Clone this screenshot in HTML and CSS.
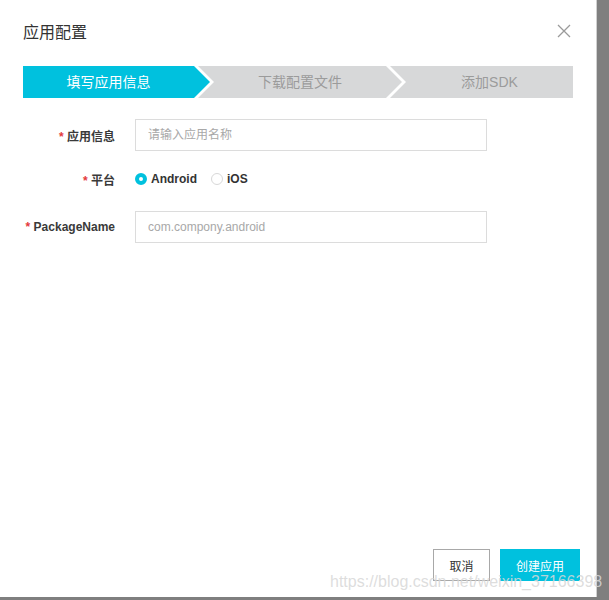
FILE: index.html
```html
<!DOCTYPE html>
<html lang="zh-CN">
<head>
    <meta charset="UTF-8">
    <title>应用配置</title>
    <link rel="stylesheet" href="styles.css">
</head>
<body>
    <div class="dialog">
        <div class="dialog-header">
            <h2 class="dialog-title">应用配置</h2>
            <span class="close">
                <svg width="14" height="14" viewBox="0 0 14 14"><path d="M1 1L13 13M13 1L1 13" stroke="#9a9a9a" stroke-width="1.3" fill="none"/></svg>
            </span>
        </div>

        <!-- steps -->
        <div class="steps">
            <div class="step first active">填写应用信息</div>
            <div class="step">下载配置文件</div>
            <div class="step last">添加SDK</div>
        </div>

        <div class="form">
            <div class="form-row">
                <label class="form-label"><span class="req">*</span> 应用信息</label>
                <input class="form-input" type="text" placeholder="请输入应用名称">
            </div>
            <div class="form-row radio-row">
                <label class="form-label"><span class="req">*</span> 平台</label>
                <span class="radio checked"><i></i>Android</span>
                <span class="radio"><i></i>iOS</span>
            </div>
            <div class="form-row">
                <label class="form-label"><span class="req">*</span> PackageName</label>
                <input class="form-input" type="text" placeholder="com.compony.android">
            </div>
        </div>

        <div class="dialog-footer">
            <button class="btn">取消</button>
            <button class="btn primary">创建应用</button>
        </div>
    </div>

    <div class="watermark">https://blog.csdn.net/weixin_37166398</div>
</body>
</html>
```

FILE: styles.css
```css
body {
    margin: 0;
    background-color: #7f7f7f;
    font-family: "Liberation Sans", "Noto Sans CJK SC", sans-serif;
    color: #333;
    width: 609px;
    height: 600px;
    overflow: hidden;
    position: relative;
}
.dialog {
    width: 597px;
    height: 597px;
    background: #fff;
    border-right: 1px solid #d0d0d0;
    box-sizing: border-box;
    display: flex;
    flex-direction: column;
}
.dialog-header {
    display: flex;
    justify-content: space-between;
    align-items: center;
    padding: 22px 25px 0 23px;
    height: 22px;
}
.dialog-title {
    margin: 0;
    font-size: 16px;
    font-weight: normal;
    color: #333;
    line-height: 22px;
}
.close {
    display: flex;
    margin-top: -5px;
}
.steps {
    display: flex;
    margin: 22px 0 0 23px;
    width: 550px;
    height: 32px;
}
.step {
    height: 32px;
    line-height: 32px;
    font-size: 14px;
    text-align: center;
    background: #d7d8d9;
    color: #9b9b9b;
    box-sizing: border-box;
    width: 204px;
    margin-left: -12px;
    padding: 0 16px;
    clip-path: polygon(0 0, calc(100% - 16px) 0, 100% 50%, calc(100% - 16px) 100%, 0 100%, 16px 50%);
}
.step.first {
    width: 187px;
    margin-left: 0;
    padding: 0 16px 0 0;
    clip-path: polygon(0 0, calc(100% - 16px) 0, 100% 50%, calc(100% - 16px) 100%, 0 100%);
}
.step.last {
    flex: 1;
    padding: 0 0 0 16px;
    clip-path: polygon(0 0, 100% 0, 100% 100%, 0 100%, 16px 50%);
}
.step.active {
    background: #00c1de;
    color: #fff;
}
.form {
    padding: 21px 0 0 23px;
}
.form-row {
    display: flex;
    align-items: center;
    height: 32px;
    margin-bottom: 16px;
}
.radio-row {
    height: 24px;
    margin-bottom: 20px;
}
.form-label {
    width: 92px;
    text-align: right;
    font-size: 12px;
    font-weight: bold;
    color: #3a3a3a;
    margin-right: 20px;
}
.req {
    color: #e4393c;
}
.form-input {
    width: 352px;
    height: 32px;
    box-sizing: border-box;
    border: 1px solid #dcdcdc;
    padding: 0 12px;
    font-size: 12px;
    font-family: inherit;
    color: #333;
    outline: none;
}
.form-input::placeholder {
    color: #a8a8a8;
}
.radio {
    display: inline-flex;
    align-items: center;
    font-size: 12px;
    font-weight: bold;
    color: #333;
    margin-right: 14px;
}
.radio i {
    width: 12px;
    height: 12px;
    box-sizing: border-box;
    border: 1px solid #d8d8d8;
    border-radius: 50%;
    margin-right: 4px;
    background: #fff;
}
.radio.checked i {
    border: 4px solid #00c1de;
    background: #fff;
}
.dialog-footer {
    margin-top: auto;
    display: flex;
    justify-content: flex-end;
    gap: 10px;
    padding: 0 16px 16px 0;
}
.btn {
    height: 32px;
    min-width: 57px;
    padding: 0 15px;
    font-size: 12px;
    font-family: inherit;
    background: #fff;
    color: #333;
    border: 1px solid #a8a8a8;
    cursor: pointer;
}
.btn.primary {
    width: 80px;
    background: #00c1de;
    border-color: #00c1de;
    color: #fff;
}
.watermark {
    position: absolute;
    left: 330px;
    top: 574px;
    font-size: 16px;
    line-height: 16px;
    color: rgba(215, 215, 215, 0.85);
    white-space: nowrap;
}
```
